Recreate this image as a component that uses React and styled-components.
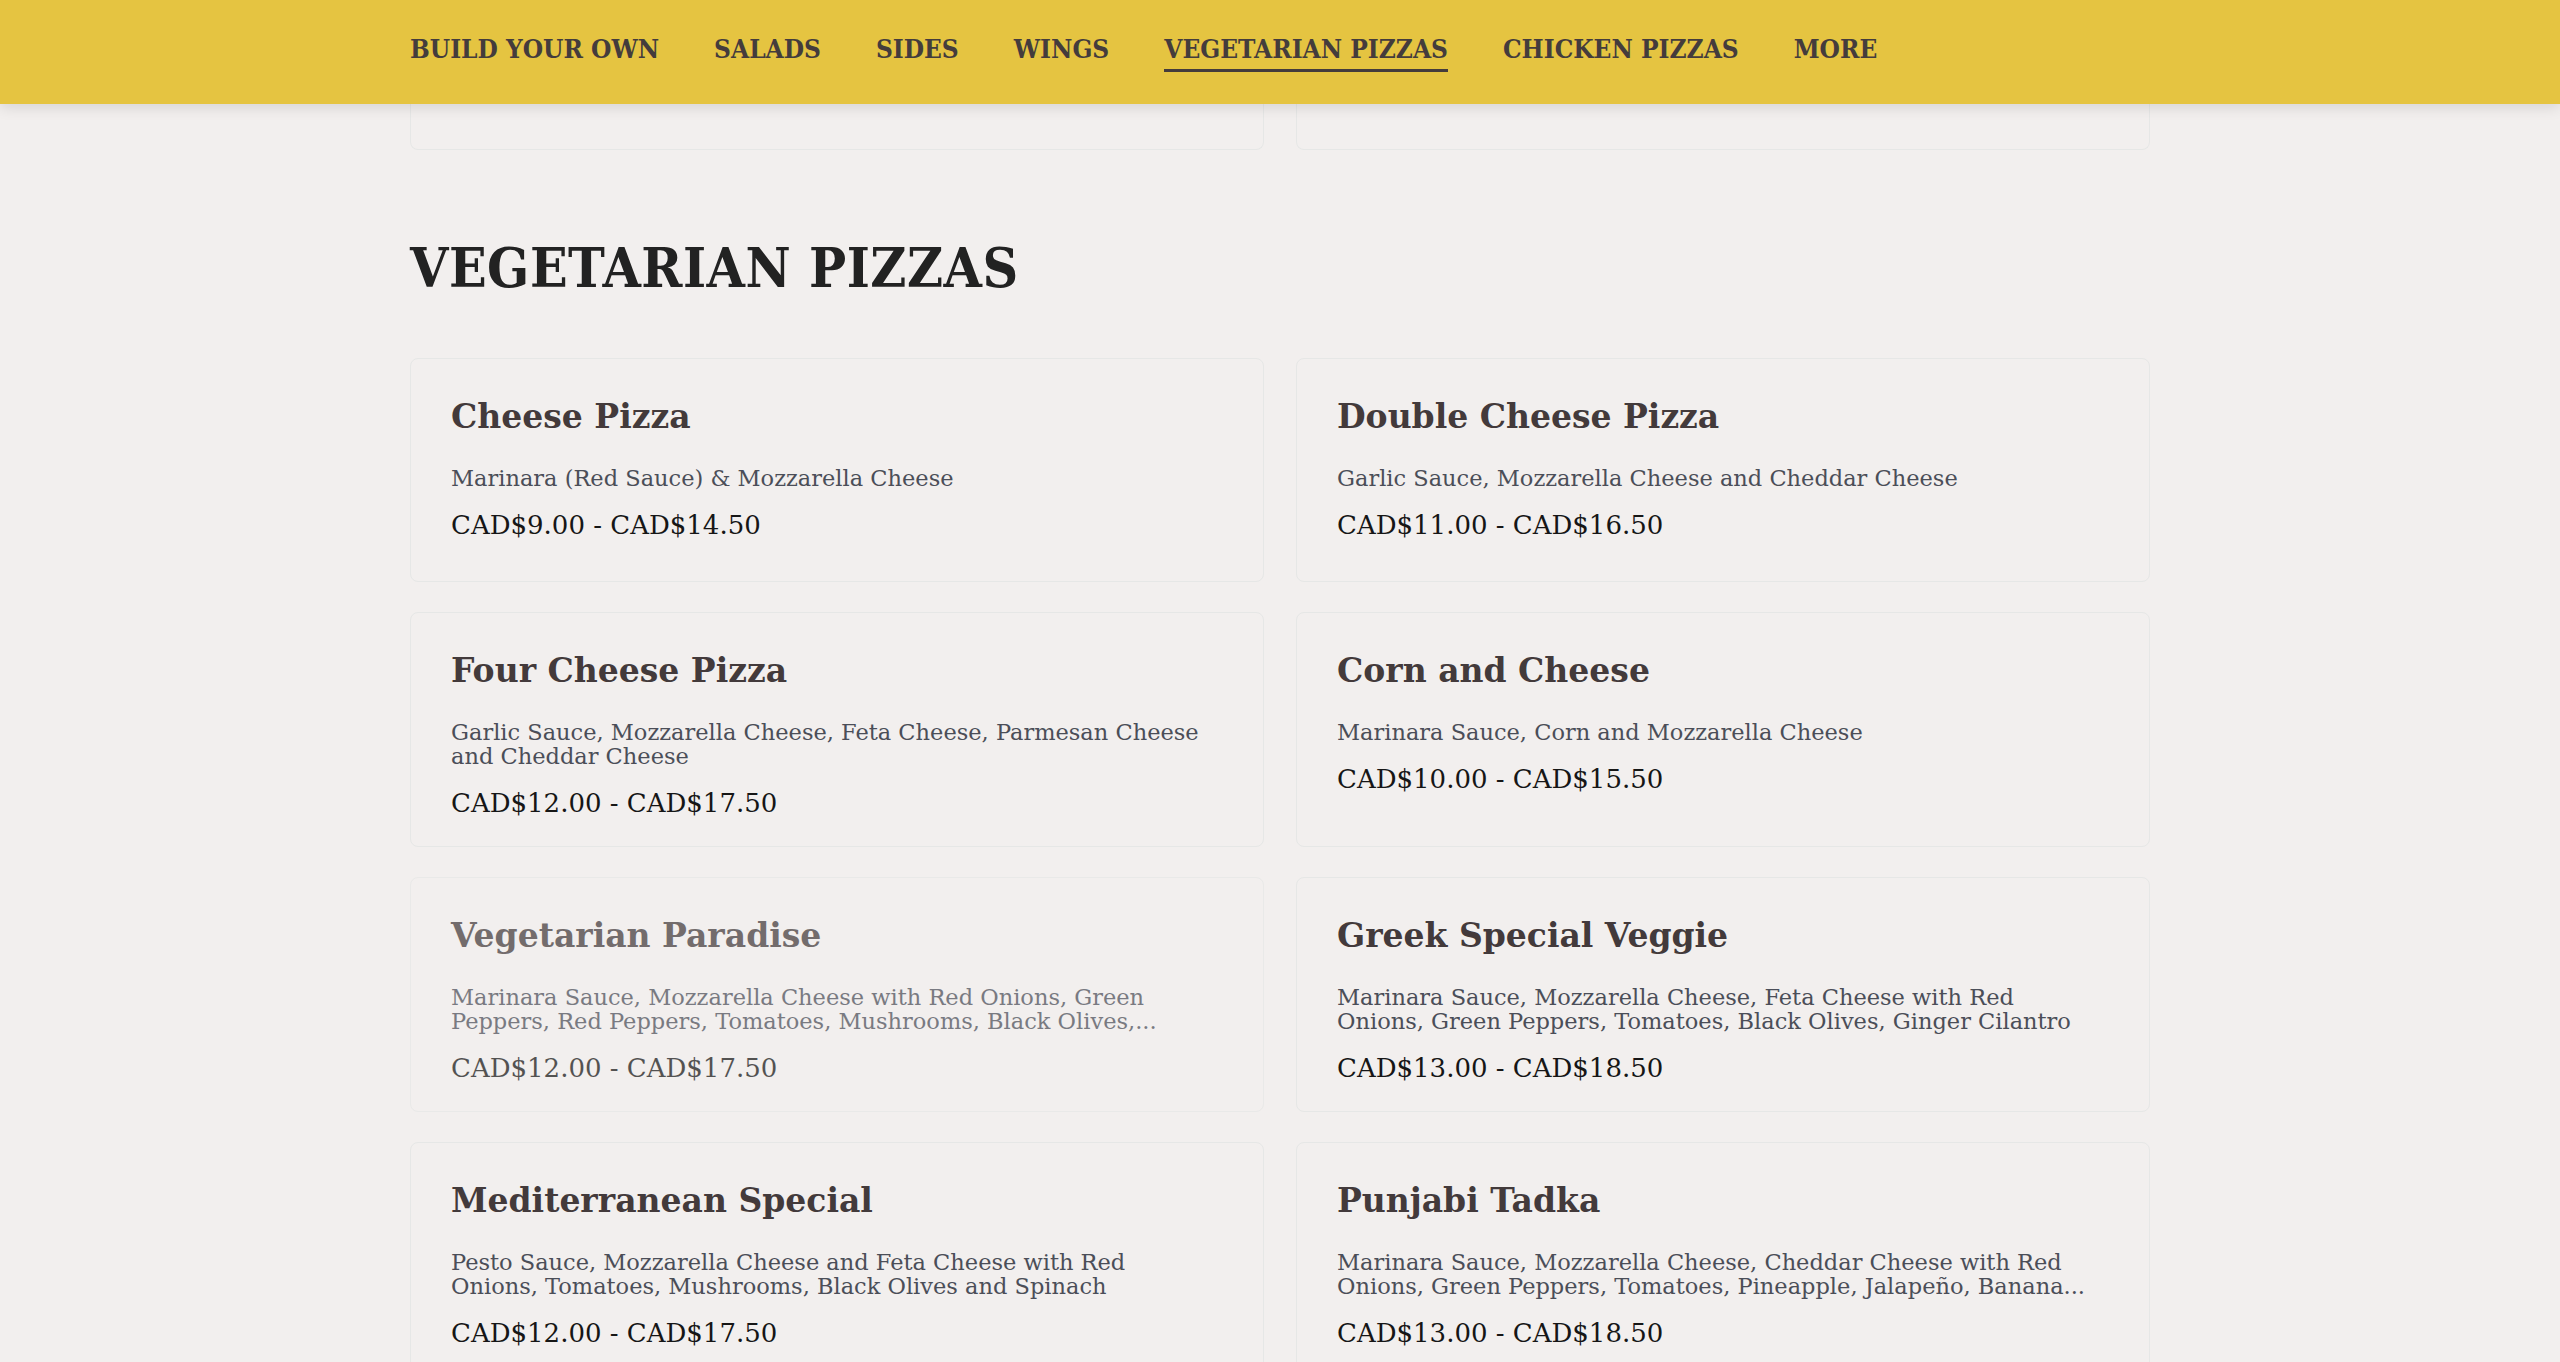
import React from 'react';
import styled, { createGlobalStyle } from 'styled-components';

const SERIF = '"DejaVu Serif", "Liberation Serif", serif';
const CONDENSED = '"DejaVu Serif Condensed", "DejaVu Serif", "Liberation Serif", serif';

const GlobalStyle = createGlobalStyle`
  html, body {
    margin: 0;
    padding: 0;
  }
  body {
    background: #f2efee;
    font-family: ${SERIF};
    overflow: hidden;
  }
  * { box-sizing: border-box; }
`;

const Header = styled.header`
  position: relative;
  z-index: 2;
  height: 104px;
  background: #e5c441;
  box-shadow: 0 3px 14px rgba(0, 0, 0, 0.12);
`;

const Nav = styled.nav`
  width: 1740px;
  height: 100%;
  margin: 0 auto;
  display: flex;
  align-items: center;
  gap: 55px;
`;

const NavLink = styled.a`
  display: block;
  padding: 2px 0 5px;
  font-family: ${CONDENSED};
  font-stretch: condensed;
  font-size: 26px;
  line-height: 30px;
  font-weight: 700;
  color: #443c3c;
  text-decoration: none;
  white-space: nowrap;
  border-bottom: 3px solid ${(p) => (p.$active ? '#443c3c' : 'transparent')};
`;

const MoreButton = styled.button`
  padding: 2px 0 5px;
  background: none;
  border: none;
  border-bottom: 3px solid transparent;
  font-family: ${CONDENSED};
  font-stretch: condensed;
  font-size: 26px;
  line-height: 30px;
  font-weight: 700;
  color: #443c3c;
  cursor: pointer;
`;

const Main = styled.main`
  width: 1740px;
  margin: 0 auto;
`;

const Grid = styled.div`
  display: grid;
  grid-template-columns: 1fr 1fr;
  column-gap: 32px;
  row-gap: 30px;
`;

const Stub = styled.div`
  height: 46px;
  border: 1px solid #e6e7e6;
  border-top: none;
  border-radius: 0 0 8px 8px;
`;

const SectionTitle = styled.h2`
  margin: 85px 0 57px;
  font-family: ${CONDENSED};
  font-stretch: condensed;
  font-size: 55px;
  line-height: 66px;
  font-weight: 700;
  letter-spacing: 0.5px;
  color: #222;
`;

const Card = styled.div`
  min-height: 224px;
  padding: 38px 40px 28px;
  border: 1px solid #e6e7e6;
  border-radius: 8px;
  opacity: ${(p) => (p.$faded ? 0.72 : 1)};
`;

const ItemName = styled.h3`
  margin: 0;
  font-size: 33px;
  line-height: 40px;
  font-weight: 700;
  color: #433a3b;
`;

const ItemDesc = styled.p`
  max-width: 752px;
  margin: 29px 0 0;
  font-size: 22.5px;
  line-height: 24px;
  color: #4b4e58;
`;

const ItemPrice = styled.div`
  margin-top: 20px;
  font-size: 26px;
  line-height: 30px;
  color: #161616;
`;

const navItems = [
  'BUILD YOUR OWN',
  'SALADS',
  'SIDES',
  'WINGS',
  'VEGETARIAN PIZZAS',
  'CHICKEN PIZZAS',
];

const pizzas = [
  {
    name: 'Cheese Pizza',
    desc: 'Marinara (Red Sauce) & Mozzarella Cheese',
    price: 'CAD$9.00 - CAD$14.50',
  },
  {
    name: 'Double Cheese Pizza',
    desc: 'Garlic Sauce, Mozzarella Cheese and Cheddar Cheese',
    price: 'CAD$11.00 - CAD$16.50',
  },
  {
    name: 'Four Cheese Pizza',
    desc: 'Garlic Sauce, Mozzarella Cheese, Feta Cheese, Parmesan Cheese and Cheddar Cheese',
    price: 'CAD$12.00 - CAD$17.50',
  },
  {
    name: 'Corn and Cheese',
    desc: 'Marinara Sauce, Corn and Mozzarella Cheese',
    price: 'CAD$10.00 - CAD$15.50',
  },
  {
    name: 'Vegetarian Paradise',
    desc: 'Marinara Sauce, Mozzarella Cheese with Red Onions, Green Peppers, Red Peppers, Tomatoes, Mushrooms, Black Olives,...',
    price: 'CAD$12.00 - CAD$17.50',
    faded: true,
  },
  {
    name: 'Greek Special Veggie',
    desc: 'Marinara Sauce, Mozzarella Cheese, Feta Cheese with Red Onions, Green Peppers, Tomatoes, Black Olives, Ginger Cilantro',
    price: 'CAD$13.00 - CAD$18.50',
  },
  {
    name: 'Mediterranean Special',
    desc: 'Pesto Sauce, Mozzarella Cheese and Feta Cheese with Red Onions, Tomatoes, Mushrooms, Black Olives and Spinach',
    price: 'CAD$12.00 - CAD$17.50',
  },
  {
    name: 'Punjabi Tadka',
    desc: 'Marinara Sauce, Mozzarella Cheese, Cheddar Cheese with Red Onions, Green Peppers, Tomatoes, Pineapple, Jalapeño, Banana...',
    price: 'CAD$13.00 - CAD$18.50',
  },
];

export default function App() {
  return (
    <>
      <GlobalStyle />
      <Header>
        <Nav>
          {navItems.map((item) => (
            <NavLink key={item} href="#" $active={item === 'VEGETARIAN PIZZAS'}>
              {item}
            </NavLink>
          ))}
          <MoreButton type="button">MORE</MoreButton>
        </Nav>
      </Header>
      <Main>
        <Grid>
          <Stub />
          <Stub />
        </Grid>
        <SectionTitle>VEGETARIAN PIZZAS</SectionTitle>
        <Grid>
          {pizzas.map((p) => (
            <Card key={p.name} $faded={p.faded}>
              <ItemName>{p.name}</ItemName>
              <ItemDesc>{p.desc}</ItemDesc>
              <ItemPrice>{p.price}</ItemPrice>
            </Card>
          ))}
        </Grid>
      </Main>
    </>
  );
}
